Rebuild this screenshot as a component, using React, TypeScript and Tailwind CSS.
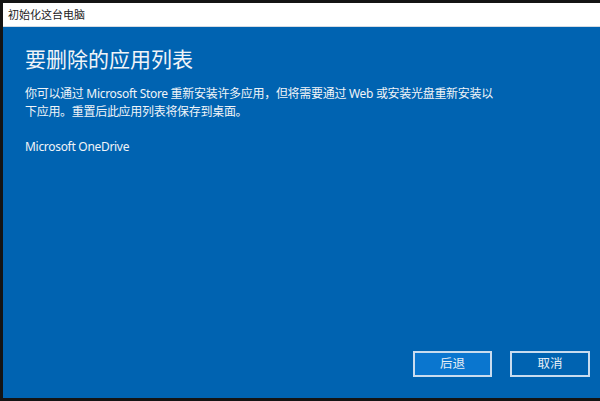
export default function App() {
  return (
    <div
      className="w-[600px] h-[401px] bg-[#141414] pt-[3px] pl-[3px] pb-[3px] flex"
      style={{ fontFamily: '"Noto Sans", "Noto Sans CJK SC", sans-serif' }}
    >
      <div className="flex-1 flex flex-col">
        {/* title bar */}
        <div className="h-[24px] bg-white border-b border-[#d4dbe3] flex items-center pl-[5px]">
          <span className="text-[11px] text-[#222] leading-none">初始化这台电脑</span>
        </div>

        {/* content */}
        <div className="flex-1 bg-[#0063b1] text-[#f0f4f8] flex flex-col px-[22px]">
          <h1 className="text-[21px] leading-[28px] mt-[18px] font-normal">要删除的应用列表</h1>
          <p className="text-[12px] tracking-[-0.3px] leading-[18px] mt-[12px]">
            你可以通过 Microsoft Store 重新安装许多应用，但将需要通过 Web 或安装光盘重新安装以
            <br />
            下应用。重置后此应用列表将保存到桌面。
          </p>
          <p className="text-[12px] tracking-[-0.3px] leading-[18px] mt-[17px]">Microsoft OneDrive</p>

          <div className="mt-auto mb-[21px] flex justify-end gap-[18px] mr-[-12px]">
            <button className="w-[79px] h-[26px] border-2 border-[#c9dcef] bg-[#0a76cf] text-[12.5px] text-[#e6eef6]">
              后退
            </button>
            <button className="w-[80px] h-[26px] border-2 border-[#c9dcef] bg-[#0063b1] text-[12.5px] text-[#e6eef6]">
              取消
            </button>
          </div>
        </div>
      </div>
    </div>
  );
}
